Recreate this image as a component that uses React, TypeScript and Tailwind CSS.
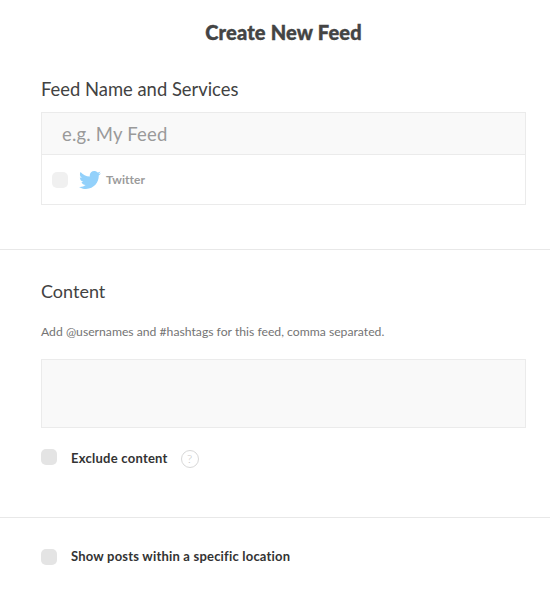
import { FaTwitter } from 'react-icons/fa';

function Check({ className }: { className: string }) {
  return <span className={`block w-4 h-4 rounded-[5px] ${className}`} />;
}

export default function App() {
  return (
    <main className="w-[550px] h-[602px] overflow-hidden bg-white font-['Lato',sans-serif] text-[#424242]">
      {/* Feed name */}
      <section className="h-[250px] pl-[41px] pr-[24px] border-b border-[#e8e8e8]">
        <h1 className="pt-[20px] h-[78px] text-center text-[20px] leading-[24px] font-black tracking-[0.2px] text-[#444444] [-webkit-text-stroke:0.4px_#444444]">
          Create New Feed
        </h1>
        <h2 className="h-[23px] text-[18.4px] leading-[23px]">Feed Name and Services</h2>
        <div className="mt-[11px] border border-[#ebebeb] h-[93px]">
          <div className="h-[42px] pt-[2px] bg-[#f9f9f9] border-b border-[#ebebeb] pl-[20px] flex items-center text-[18.5px] tracking-[0.2px] text-[#9a9a9a]">
            e.g. My Feed
          </div>
          <div className="h-[49px] pl-[10px] flex items-center">
            <Check className="bg-[#f0f0f0]" />
            <FaTwitter className="ml-[11px] w-[22px] h-[22px] text-[#93d1fb]" />
            <span className="ml-[5px] text-[12px] font-bold tracking-[0.05px] text-[#9b9b9b]">Twitter</span>
          </div>
        </div>
      </section>

      {/* Content */}
      <section className="h-[268px] pl-[41px] pr-[24px] border-b border-[#e8e8e8]">
        <h2 className="pt-[30px] text-[18px] leading-[23px]">Content</h2>
        <p className="mt-[20px] text-[12.2px] leading-[18px] text-[#747474]">
          Add @usernames and #hashtags for this feed, comma separated.
        </p>
        <div className="mt-[18px] h-[69px] bg-[#f9f9f9] border border-[#ebebeb]" />
        <div className="mt-[21px] flex items-center">
          <Check className="bg-[#e4e4e4] mt-[-4px]" />
          <span className="ml-[14px] text-[13px] font-bold tracking-[0.25px] text-[#333333]">Exclude content</span>
          <span className="ml-[13px] w-[18px] h-[18px] rounded-full border border-[#d8d8d8] flex items-center justify-center text-[12px] font-light text-[#c4c4c4]">?</span>
        </div>
      </section>

      {/* Location */}
      <section className="pl-[41px] pr-[24px] pt-[29px] flex items-center">
        <Check className="bg-[#e4e4e4]" />
        <span className="ml-[14px] text-[13px] font-bold tracking-[0.2px] text-[#333333]">Show posts within a specific location</span>
      </section>
    </main>
  );
}
